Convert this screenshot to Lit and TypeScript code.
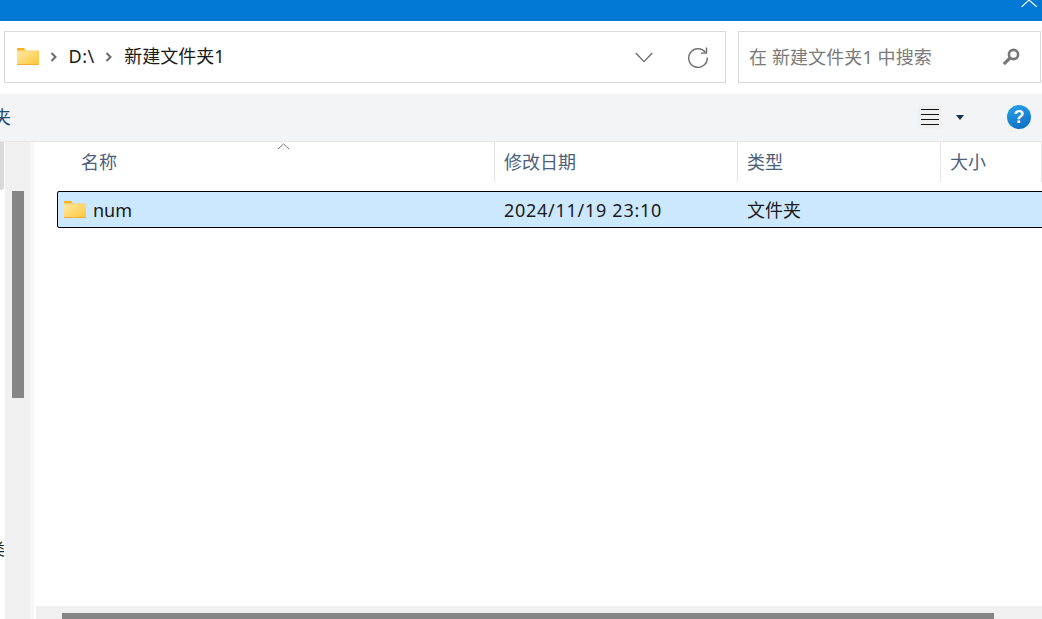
import { LitElement, html, css, svg } from "lit";
import { customElement } from "lit/decorators.js";

const folder = (x: number) => html`<svg class="folder" style="margin-left:${x}px" width="23" height="18" viewBox="0 0 23 18">
  <defs><linearGradient id="fg" x1="0" y1="0" x2="1" y2="1"><stop offset="0" stop-color="#ffeba6"/><stop offset="1" stop-color="#fdc436"/></linearGradient></defs>
  <path d="M0 1.2C0 .5.4 0 1 0h6l2 2.5h-9z" fill="#fbb218"/>
  <rect x="0" y="3" width="22" height="14" fill="url(#fg)"/>
  <rect x="0" y="2.5" width="22" height="1" fill="#fcd062"/>
  <rect x="0" y="16" width="22" height="1" fill="#f3ae30"/>
</svg>`;
const chev = svg`<path d="M1.5 1l4 4-4 4" fill="none" stroke="#6a6a6a" stroke-width="2"/>`;

@customElement("app-root")
export class AppRoot extends LitElement {
  static styles = css`
    :host { display: block; width: 1042px; height: 619px; overflow: hidden; background: #fff; font-family: "Noto Sans", "Noto Sans CJK SC", sans-serif; font-size: 18px; color: #1a1a1a; }
    .title { height: 21px; background: #0078d4; display: flex; justify-content: flex-end; padding-right: 4px; }
    .nav { height: 73px; box-sizing: border-box; padding: 10px 1px 11px 4px; display: flex; gap: 12px; }
    .box { box-sizing: border-box; height: 52px; border: 1.5px solid #d9d9d9; display: flex; align-items: center; background: #fff; }
    .addr { width: 722px; }
    .search { width: 303px; color: #7a7a7a; }
    .folder { flex: none; display: block; }
    .crumb { line-height: 24px; color: #1a1a1a; white-space: nowrap; padding-bottom: 2px; }
    .drive { letter-spacing: .5px; }
    .sep { flex: none; }
    .fill { flex: 1; }
    .stxt { margin-left: 10px; white-space: nowrap; flex: 1; padding-bottom: 2px; letter-spacing: .1px; }
    .toolbar { height: 46px; padding-bottom: 1px; background: #f3f4f6; border-bottom: 1px solid #e6e6e6; display: flex; align-items: center; }
    .clip { width: 11px; overflow: hidden; flex: none; color: #1f4e79; white-space: nowrap; direction: rtl; line-height: 24px; }
    .view { margin-left: 907px; width: 24px; height: 24px; background: #f0f0f1; border-radius: 2px; display: flex; align-items: center; justify-content: center; flex: none; }
    .caret { margin-left: 14px; flex: none; }
    .help { margin-left: 43px; flex: none; width: 24px; height: 24px; border-radius: 50%; background: linear-gradient(160deg, #2ba2ea, #0a6cc0); color: #fff; font: bold 18px/24px "Liberation Sans", sans-serif; text-align: center; }
    .main { height: 477px; display: flex; }
    .side { width: 36px; flex: none; display: grid; grid-template-columns: 5px 25px 4px 2px; }
    .edge { display: flex; flex-direction: column; align-items: flex-start; }
    .edgetop { width: 4px; height: 48px; background: #d9d9d9; border-radius: 0 0 3px 0; }
    .edgetxt { margin-top: 351px; width: 5px; height: 16px; overflow: hidden; direction: rtl; font-size: 16px; line-height: 16px; white-space: nowrap; color: #222; }
    .track { background: #f0f0f0; padding: 49px 6px 0 7px; }
    .thumb { height: 207px; background: #858585; }
    .gap { background: #f7f7f7; }
    .content { flex: 1; min-width: 0; display: flex; flex-direction: column; overflow: hidden; }
    .head { height: 41px; position: relative; display: grid; grid-template-columns: 461px 243px 203px 1fr; color: #4c607a; flex: none; margin-left: -2px; }
    .head > div { line-height: 41px; height: 40px; padding-left: 9px; box-sizing: border-box; border-right: 1px solid #e5e5e5; white-space: nowrap; }
    .head > div:first-child { padding-left: 47px; }
    .head > div:last-child { border-right: 0; }
    .sort { position: absolute; left: 243px; top: 1px; }
    .row { margin: 8px -20px 0 21px; height: 37px; box-sizing: border-box; border: 1px solid #000; border-radius: 2px; background: #cce8ff; display: grid; grid-template-columns: 436px 243px 1fr; align-items: center; flex: none; white-space: nowrap; color: #1a1a1a; }
    .name { display: flex; align-items: center; gap: 6px; }
    .rowdate { padding-left: 10px; letter-spacing: .72px; }
    .rowtype { padding-left: 10px; padding-bottom: 2px; }
    .list { flex: 1; }
    .hs { height: 13px; background: #f0f0f0; padding: 7px 48px 0 26px; box-sizing: border-box; flex: none; }
    .hthumb { height: 6px; background: #858585; }
  `;

  render() {
    return html`
      <div class="title">
        <svg width="17" height="7" viewBox="0 0 17 7"><path d="M.5 7L8 0l8 7" fill="none" stroke="#fff" stroke-width="1.1"/></svg>
      </div>
      <div class="nav">
        <div class="box addr">
          ${folder(11.5)}
          <svg class="sep" style="margin-left:10px" width="7" height="10" viewBox="0 0 7 10">${chev}</svg>
          <span class="crumb drive" style="margin-left:12px">D:\\</span>
          <svg class="sep" style="margin-left:10.5px" width="7" height="10" viewBox="0 0 7 10">${chev}</svg>
          <span class="crumb" style="margin-left:12px">新建文件夹1</span>
          <span class="fill"></span>
          <svg width="18" height="11" viewBox="0 0 18 11"><path d="M.8 1l8.2 8.6L17.2 1" fill="none" stroke="#666" stroke-width="1.2"/></svg>
          <svg style="margin:0 16px 0 34px" width="22" height="22" viewBox="0 0 22 22"><path d="M18.5 6.5A9.3 9.3 0 1 0 20.3 11.5" fill="none" stroke="#6e6e6e" stroke-width="1.4"/><path d="M19.5 1.5v5.6h-5.6" fill="none" stroke="#6e6e6e" stroke-width="1.4"/></svg>
        </div>
        <div class="box search">
          <span class="stxt">在 新建文件夹1 中搜索</span>
          <svg style="margin-right:20px" width="18" height="18" viewBox="0 0 18 18"><circle cx="11.5" cy="6.5" r="4.6" fill="none" stroke="#777" stroke-width="2.6"/><path d="M7.8 10.2L1.8 16.2" stroke="#777" stroke-width="3.2"/></svg>
        </div>
      </div>
      <div class="toolbar">
        <div class="clip">夹</div>
        <div class="view"><svg width="18" height="18" viewBox="0 0 18 18"><path d="M0 1.5h18M0 6.5h18M0 11.5h18M0 16.5h18" stroke="#111" stroke-width="1"/></svg></div>
        <svg class="caret" width="8" height="5" viewBox="0 0 8 5"><path d="M0 0h8L4 5z" fill="#1c2f50"/></svg>
        <div class="help">?</div>
      </div>
      <div class="main">
        <div class="side">
          <div class="edge"><div class="edgetop"></div><div class="edgetxt">类</div></div>
          <div class="track"><div class="thumb"></div></div>
          <div class="gap"></div>
          <div></div>
        </div>
        <div class="content">
          <div class="head">
            <div>名称</div><div>修改日期</div><div>类型</div><div>大小</div>
            <svg class="sort" width="13" height="7" viewBox="0 0 13 7"><path d="M.8 6.2L6.5 1l5.7 5.2" fill="none" stroke="#777" stroke-width="1"/></svg>
          </div>
          <div class="row">
            <div class="name">${folder(6)}<span>num</span></div>
            <div class="rowdate">2024/11/19 23:10</div>
            <div class="rowtype">文件夹</div>
          </div>
          <div class="list"></div>
          <div class="hs"><div class="hthumb"></div></div>
        </div>
      </div>
    `;
  }
}
